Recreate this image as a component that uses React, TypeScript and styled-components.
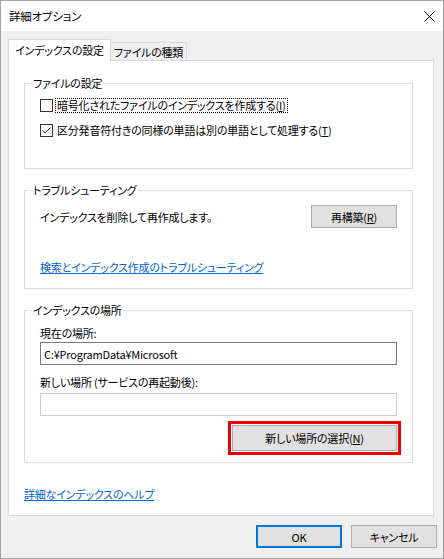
import React from 'react';
import styled, { createGlobalStyle } from 'styled-components';

const GlobalStyle = createGlobalStyle`
  html, body {
    margin: 0;
    padding: 0;
    background: #ffffff;
  }
  body {
    font-family: "Noto Sans CJK JP", "Noto Sans", sans-serif;
    font-size: 11px;
    font-feature-settings: "palt";
    letter-spacing: -0.2px;
    color: #000000;
  }
`;

const Window = styled.div`
  width: 444px;
  height: 559px;
  box-sizing: border-box;
  border: 1px solid #a3a3a3;
  display: flex;
  flex-direction: column;
  background: #f0f0f0;
`;

const TitleBar = styled.div`
  height: 30px;
  flex-shrink: 0;
  background: #ffffff;
  display: flex;
  align-items: center;
  justify-content: space-between;
  padding: 0 8px 0 8px;
  font-size: 11.5px;
`;

const CloseButton = styled.div`
  width: 12px;
  height: 12px;
  display: flex;
  align-items: center;
  justify-content: center;
`;

const Body = styled.div`
  flex: 1;
  display: flex;
  flex-direction: column;
  padding: 8px 9px 10px 7px;
`;

const TabRow = styled.div`
  display: flex;
  align-items: flex-end;
  height: 22px;
  margin-bottom: -1px;
`;

const Tab = styled.div<{ $active?: boolean }>`
  box-sizing: border-box;
  height: ${(p) => (p.$active ? '22px' : '19px')};
  width: ${(p) => (p.$active ? '103px' : '76px')};
  border: 1px solid #d9d9d9;
  border-bottom: none;
  border-left: ${(p) => (p.$active ? '1px solid #d9d9d9' : 'none')};
  background: ${(p) => (p.$active ? '#ffffff' : '#f0f0f0')};
  display: flex;
  align-items: center;
  justify-content: center;
  white-space: nowrap;
  padding-bottom: ${(p) => (p.$active ? '2px' : '0')};
  position: ${(p) => (p.$active ? 'relative' : 'static')};
  z-index: ${(p) => (p.$active ? 2 : 'auto')};
`;

const Panel = styled.div`
  position: relative;
  z-index: 1;
  box-sizing: border-box;
  height: 456px;
  border: 1px solid #d9d9d9;
  background: #ffffff;
  padding: 14px 20px 0 15px;
  display: flex;
  flex-direction: column;
`;

const GroupBox = styled.fieldset<{ $height: number }>`
  box-sizing: border-box;
  height: ${(p) => p.$height}px;
  margin: 0;
  padding: 0 15px;
  border: 1px solid #dcdcdc;
  min-width: 0;
  display: flex;
  flex-direction: column;
  & + & {
    margin-top: 13px;
  }
`;

const Legend = styled.legend`
  margin-left: -8px;
  padding: 0 1px;
  line-height: 16px;
`;

const CheckRow = styled.label<{ $gap: number }>`
  display: flex;
  align-items: center;
  height: 16px;
  gap: 3px;
  margin-top: ${(p) => p.$gap}px;
`;

const CheckText = styled.span<{ $focused?: boolean }>`
  line-height: 13px;
  padding: 0 1px;
  outline: ${(p) => (p.$focused ? '1px dotted #000000' : 'none')};
`;

const ActionRow = styled.div`
  display: flex;
  align-items: center;
  justify-content: space-between;
  margin-top: 7px;
  height: 23px;
`;

const Button = styled.button<{ $width: number; $height?: number; $primary?: boolean; $marked?: boolean }>`
  box-sizing: border-box;
  width: ${(p) => p.$width}px;
  height: ${(p) => p.$height ?? 23}px;
  background: #e1e1e1;
  border: ${(p) => (p.$primary ? '2px solid #0078d7' : '1px solid #adadad')};
  font-family: inherit;
  font-size: 11px;
  font-feature-settings: "palt";
  letter-spacing: inherit;
  color: #000000;
  padding: 0;
  outline: ${(p) => (p.$marked ? '3px solid #ee0000' : 'none')};
  outline-offset: 1px;
  border-radius: 0;
`;

const Link = styled.a<{ $gap: number }>`
  display: block;
  align-self: flex-start;
  margin-top: ${(p) => p.$gap}px;
  line-height: 16px;
  color: #0066cc;
  text-decoration: underline;
  cursor: pointer;
`;

const FieldLabel = styled.div<{ $gap: number }>`
  margin-top: ${(p) => p.$gap}px;
  line-height: 16px;
`;

const TextBox = styled.input<{ $disabled?: boolean }>`
  box-sizing: border-box;
  height: 23px;
  width: 100%;
  margin: ${(p) => (p.$disabled ? '3px' : '1px')} 0 0 0;
  border: 1px solid ${(p) => (p.$disabled ? '#cccccc' : '#7a7a7a')};
  background: #ffffff;
  padding: 0 3px;
  font-family: inherit;
  font-size: 11px;
  letter-spacing: inherit;
  color: #000000;
  outline: none;
`;

const ButtonRow = styled.div`
  display: flex;
  justify-content: flex-end;
  margin-top: 9px;
`;

const Footer = styled.div`
  display: flex;
  justify-content: flex-end;
  gap: 9px;
  margin-top: 9px;
  margin-right: -3px;
`;

const Checkbox = ({ checked }: { checked?: boolean }) => (
  <svg width="13" height="13" viewBox="0 0 13 13">
    <rect x="0.5" y="0.5" width="12" height="12" fill="#ffffff" stroke="#333333" />
    {checked && <path d="M2.5 6.5 L5 9 L10.5 3.5" fill="none" stroke="#333333" strokeWidth="1" />}
  </svg>
);

const App = () => {
  return (
    <>
      <GlobalStyle />
      <Window>
        <TitleBar>
          <span>詳細オプション</span>
          <CloseButton>
            <svg width="11" height="11" viewBox="0 0 11 11">
              <path d="M0.5 0.5 L10.5 10.5 M10.5 0.5 L0.5 10.5" stroke="#000000" strokeWidth="1" />
            </svg>
          </CloseButton>
        </TitleBar>
        <Body>
          <TabRow>
            <Tab $active>インデックスの設定</Tab>
            <Tab>ファイルの種類</Tab>
          </TabRow>
          <Panel>
            <GroupBox $height={94}>
              <Legend>ファイルの設定</Legend>
              <CheckRow $gap={6}>
                <Checkbox />
                <CheckText $focused>
                  暗号化されたファイルのインデックスを作成する(<u>I</u>)
                </CheckText>
              </CheckRow>
              <CheckRow $gap={9}>
                <Checkbox checked />
                <CheckText>
                  区分発音符付きの同様の単語は別の単語として処理する(<u>T</u>)
                </CheckText>
              </CheckRow>
            </GroupBox>
            <GroupBox $height={107}>
              <Legend>トラブルシューティング</Legend>
              <ActionRow>
                <span>インデックスを削除して再作成します。</span>
                <Button $width={86}>
                  再構築(<u>R</u>)
                </Button>
              </ActionRow>
              <Link $gap={31}>検索とインデックス作成のトラブルシューティング</Link>
            </GroupBox>
            <GroupBox $height={161}>
              <Legend>インデックスの場所</Legend>
              <FieldLabel $gap={7}>現在の場所:</FieldLabel>
              <TextBox readOnly value="C:¥ProgramData¥Microsoft" />
              <FieldLabel $gap={9}>新しい場所 (サービスの再起動後):</FieldLabel>
              <TextBox $disabled readOnly value="" />
              <ButtonRow>
                <Button $width={165} $height={26} $marked>
                  新しい場所の選択(<u>N</u>)
                </Button>
              </ButtonRow>
            </GroupBox>
            <Link $gap={23}>詳細なインデックスのヘルプ</Link>
          </Panel>
          <Footer>
            <Button $width={86} $primary>
              OK
            </Button>
            <Button $width={86}>キャンセル</Button>
          </Footer>
        </Body>
      </Window>
    </>
  );
};

export default App;
